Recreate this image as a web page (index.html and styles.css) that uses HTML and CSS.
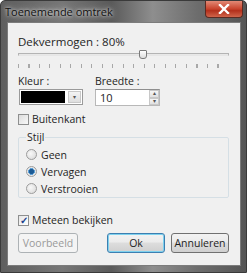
FILE: index.html
```html
<!DOCTYPE html>
<html lang="nl">
<head>
    <meta charset="UTF-8">
    <title>Toenemende omtrek</title>
    <link rel="stylesheet" href="styles.css">
</head>
<body>
    <div class="window">
        <div class="titlebar">
            <span class="title">Toenemende omtrek</span>
            <div class="close">
                <svg width="12" height="10" viewBox="0 0 12 10"><path d="M2 1 L10 9 M10 1 L2 9" stroke="#fff" stroke-width="2.4" stroke-linecap="square"/></svg>
            </div>
        </div>

        <div class="client">
            <div class="label-opacity">Dekvermogen : 80%</div>
            <div class="slider">
                <div class="track"></div>
                <div class="thumb"></div>
            </div>
            <div class="ticks"></div>

            <div class="row-fields">
                <div class="field">
                    <label>Kleur :</label>
                    <div class="colorbox">
                        <div class="swatch"></div>
                        <div class="drop">&#9662;</div>
                    </div>
                </div>
                <div class="field">
                    <label>Breedte :</label>
                    <div class="spinner">
                        <span class="spin-value">10</span>
                        <div class="spin-btns">
                            <div class="spin-btn">&#9652;</div>
                            <div class="spin-btn">&#9662;</div>
                        </div>
                    </div>
                </div>
            </div>

            <div class="check">
                <span class="box"></span>
                <span>Buitenkant</span>
            </div>

            <fieldset class="group">
                <legend>Stijl</legend>
                <div class="radio"><span class="dot"></span>Geen</div>
                <div class="radio"><span class="dot on"></span>Vervagen</div>
                <div class="radio"><span class="dot"></span>Verstrooien</div>
            </fieldset>

            <div class="check preview-check">
                <span class="box checked">&#10003;</span>
                <span>Meteen bekijken</span>
            </div>

            <div class="buttons">
                <button class="btn disabled">Voorbeeld</button>
                <div class="spacer"></div>
                <button class="btn default">Ok</button>
                <button class="btn">Annuleren</button>
            </div>
        </div>
    </div>
</body>
</html>
```
FILE: styles.css
```css
:root {
    --face: #f0f0f0;
    --text: #1e1e1e;
    --border: #a9a9a9;
}
body {
    margin: 0;
    font-family: 'Open Sans', 'Noto Sans', sans-serif;
    font-size: 10.5px;
    color: var(--text);
    background: #fff;
}
.window {
    width: 247px;
    height: 273px;
    box-sizing: border-box;
    display: flex;
    flex-direction: column;
    background: linear-gradient(90deg, #5e5e5e 0%, #777 25%, #5a5a5a 45%, #8e8e8e 62%, #6d6d6d 80%, #555 100%);
    border: 1px solid #3a3a3a;
    border-radius: 5px 5px 0 0;
}
.titlebar {
    height: 21px;
    display: flex;
    align-items: flex-start;
    justify-content: space-between;
}
.title {
    margin: 3px 0 0 4px;
    font-size: 11px;
    color: #111;
    text-shadow: 0 0 6px #ddd, 0 0 3px #ddd;
}
.close {
    width: 38px;
    height: 17px;
    margin-right: 3px;
    box-sizing: border-box;
    border: 1px solid #5a2a22;
    border-top: none;
    border-radius: 0 0 4px 4px;
    background: linear-gradient(#e28a76, #c8432c 50%, #b3301c 60%, #d0644a);
    display: flex;
    align-items: center;
    justify-content: center;
}
.client {
    flex: 1;
    margin: 0 5px 6px 6px;
    background: var(--face);
    border: 1px solid #7c7c7c;
    padding: 11px 11px 0 10px;
    display: flex;
    flex-direction: column;
}
.label-opacity {
    font-size: 11.5px;
    line-height: 15px;
}
.slider {
    position: relative;
    height: 10px;
    margin-top: 1px;
}
.track {
    margin-top: 3px;
    height: 1px;
    border: 1px solid #b4b4b4;
    border-bottom-color: #e6e6e6;
    background: #e8e8e8;
}
.thumb {
    position: absolute;
    top: 0;
    left: 121px;
    width: 6px;
    height: 7px;
    border: 1px solid #7a7a7a;
    border-radius: 1px 1px 3px 3px;
    background: linear-gradient(#fdfdfd, #dcdcdc);
}
.ticks {
    height: 4px;
    margin-top: 4px;
    margin-right: 1px;
    background: repeating-linear-gradient(90deg, #a8a8a8 0 1px, transparent 1px 10.5px);
}
.row-fields {
    display: flex;
    gap: 12px;
    margin-top: 6px;
}
.field {
    display: flex;
    flex-direction: column;
    gap: 1px;
}
.field label {
    line-height: 14px;
}
.colorbox {
    width: 64px;
    height: 16px;
    box-sizing: border-box;
    border: 1px solid #9a9a9a;
    background: #fff;
    display: flex;
    align-items: stretch;
    padding: 1px;
    gap: 3px;
    margin-left: 1px;
}
.swatch {
    flex: 1;
    background: #000;
}
.drop {
    width: 11px;
    border: 1px solid #c8c8c8;
    background: linear-gradient(#f4f4f4, #dedede);
    font-size: 6px;
    color: #555;
    display: flex;
    align-items: center;
    justify-content: center;
}
.spinner {
    width: 65px;
    height: 17px;
    box-sizing: border-box;
    border: 1px solid #b8b8b8;
    border-top-color: #8f8f8f;
    background: #fff;
    display: flex;
    justify-content: space-between;
}
.spin-value {
    padding-left: 4px;
    font-size: 11px;
    line-height: 15px;
}
.spin-btns {
    width: 10px;
    display: flex;
    flex-direction: column;
}
.spin-btn {
    flex: 1;
    border: 1px solid #c8c8c8;
    background: linear-gradient(#f6f6f6, #e0e0e0);
    font-size: 6px;
    line-height: 5px;
    color: #555;
    text-align: center;
}
.check {
    display: flex;
    align-items: center;
    gap: 3px;
    margin-top: 6px;
    line-height: 14px;
}
.box {
    width: 11px;
    height: 11px;
    box-sizing: border-box;
    border: 1px solid #8e8f8f;
    background: linear-gradient(135deg, #dcdcdc, #f8f8f8);
    font-size: 10px;
    line-height: 9px;
    text-align: center;
    color: #1b3f8c;
}
.box.checked {
    background: linear-gradient(135deg, #e6e6e6, #fff);
    font-weight: bold;
}
.group {
    margin: 5px 0 0 0;
    padding: 0 0 0 7px;
    border: 1px solid #d5dfe5;
    border-radius: 2px;
    height: 67px;
    box-sizing: border-box;
}
.group legend {
    padding: 0 1px;
    line-height: 13px;
}
.radio {
    display: flex;
    align-items: center;
    gap: 4px;
    height: 17px;
}
.radio:first-of-type {
    margin-top: 2px;
}
.dot {
    width: 11px;
    height: 11px;
    box-sizing: border-box;
    border-radius: 50%;
    border: 1px solid #9c9c9c;
    background: radial-gradient(circle at 40% 40%, #f8f8f8, #d6d6d6);
}
.dot.on {
    background: radial-gradient(circle, #1c5a94 0 2.2px, #5ea0d6 2.6px 3.2px, #e8e8e8 3.6px);
}
.preview-check {
    margin-top: 15px;
}
.buttons {
    display: flex;
    margin-top: 6px;
    gap: 6px;
}
.spacer {
    flex: 1;
}
.btn {
    height: 20px;
    padding: 0;
    font-family: inherit;
    font-size: 10.5px;
    color: var(--text);
    border: 1px solid #707070;
    border-radius: 3px;
    background: linear-gradient(#f2f2f2 0%, #ebebeb 45%, #dddddd 50%, #cfcfcf 100%);
}
.btn.disabled {
    width: 60px;
    color: #9a9a9a;
    border-color: #adb2b5;
    background: #f4f4f4;
}
.btn.default {
    width: 58px;
    border-color: #3c7fb1;
    box-shadow: inset 0 0 0 1px #7ed1ee;
}
.btn:last-child {
    width: 58px;
}
```
